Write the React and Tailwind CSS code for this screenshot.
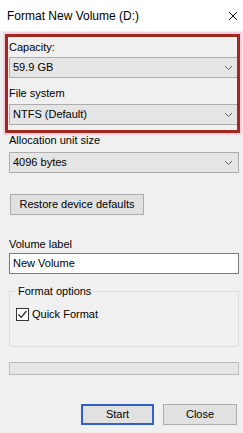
import React from "react";

const font = { fontFamily: '"Liberation Sans", Arial, sans-serif' };

function Chevron() {
  return (
    <svg width="9" height="6" viewBox="0 0 9 6" className="shrink-0">
      <path d="M1 1 L4.5 4.5 L8 1" fill="none" stroke="#606060" strokeWidth="1" />
    </svg>
  );
}

function Combo({ value }) {
  return (
    <div className="h-[21px] w-full border border-[#adadad] bg-[#e5e5e5] flex items-center pl-[3px] pr-[5px] text-[11px] leading-[15px] text-black">
      <span className="flex-1">{value}</span>
      <Chevron />
    </div>
  );
}

export default function App() {
  return (
    <div
      className="relative w-[243px] h-[433px] bg-[#f0f0f0] overflow-hidden text-black"
      style={font}
    >
      <div className="h-[31px] bg-white flex items-center pl-[7px] pr-[5px]">
        <span className="flex-1 text-[12px] leading-[16px]">Format New Volume (D:)</span>
        <svg width="10" height="10" viewBox="0 0 10 10">
          <path d="M1 1 L9 9 M9 1 L1 9" stroke="#111" strokeWidth="1" />
        </svg>
      </div>

      <div className="flex flex-col pl-[9px] pr-[4px] text-[11px] leading-[15px]">
        <div className="mt-[9px] h-[15px]">Capacity:</div>
        <div className="mt-[2px]"><Combo value="59.9 GB" /></div>
        <div className="mt-[8px] h-[15px]">File system</div>
        <div className="mt-[3px]"><Combo value="NTFS (Default)" /></div>
        <div className="mt-[8px] h-[15px]">Allocation unit size</div>
        <div className="mt-[4px]"><Combo value="4096 bytes" /></div>

        <button className="mt-[21px] ml-[1px] w-[134px] h-[21px] border border-[#adadad] bg-[#e1e1e1] text-[11px] leading-[15px] flex items-center justify-center">
          Restore device defaults
        </button>

        <div className="mt-[22px] h-[15px]">Volume label</div>
        <div className="mt-[1px] h-[21px] border border-[#7a7a7a] bg-white flex items-center pl-[3px]">
          New Volume
        </div>

        <fieldset className="mt-[10px] h-[63px] border border-[#dcdcdc] px-[6px]">
          <legend className="px-[2px] h-[15px] leading-[15px]">Format options</legend>
          <div className="mt-[8px] flex items-center gap-[3px]">
            <div className="w-[13px] h-[13px] border border-[#333] bg-white flex items-center justify-center">
              <svg width="11" height="11" viewBox="0 0 11 11">
                <path d="M1.5 5.5 L4.2 8.3 L9.5 2" fill="none" stroke="#222" strokeWidth="1.2" />
              </svg>
            </div>
            <span>Quick Format</span>
          </div>
        </fieldset>

        <div className="mt-[15px] h-[13px] border border-[#bcbcbc] bg-[#e6e6e6]" />

        <div className="mt-[29px] flex justify-end gap-[9px] pr-[2px]">
          <button className="w-[73px] h-[21px] border-2 border-[#2f5fcb] bg-[#e1e1e1] flex items-center justify-center leading-[15px]">
            Start
          </button>
          <button className="w-[74px] h-[21px] border border-[#adadad] bg-[#e1e1e1] flex items-center justify-center leading-[15px]">
            Close
          </button>
        </div>
      </div>

      <div className="absolute left-[5px] top-[34px] w-[235px] h-[99px] border-[3px] border-[#a02a20] shadow-[0_0_0_2px_#f7cfe0] pointer-events-none" />
    </div>
  );
}
